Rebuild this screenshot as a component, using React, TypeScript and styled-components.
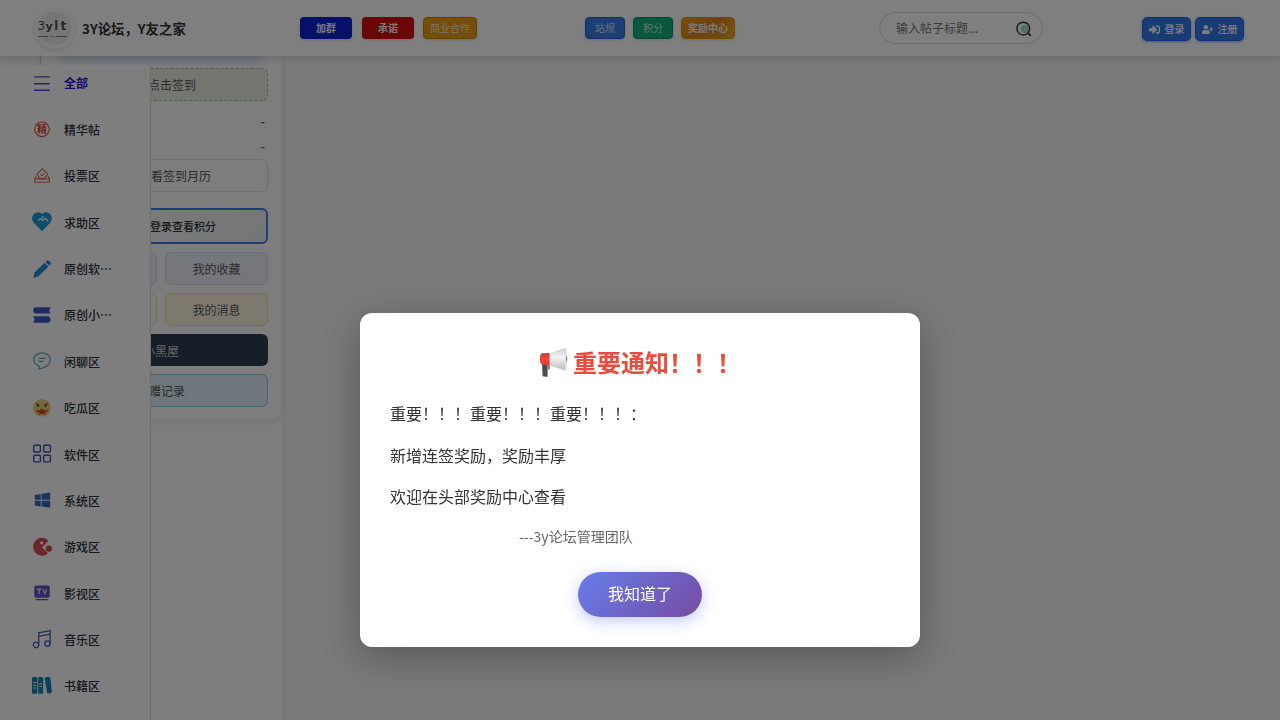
import React from "react";
import styled, { createGlobalStyle, css } from "styled-components";
import { FaSignInAlt, FaUserPlus } from "react-icons/fa";
import { Calendar } from "lucide-react";

const Global = createGlobalStyle`
  * { box-sizing: border-box; }
  html, body { margin: 0; height: 100%; overflow: hidden; }
  body {
    font-family: "Noto Sans CJK SC", sans-serif;
    background: #f5f5f6;
    color: #333;
  }
  button, input { font-family: inherit; margin: 0; }
`;

const Page = styled.div`
  position: relative;
  display: flex;
  flex-direction: column;
  height: 100vh;
  overflow: hidden;
`;

const Header = styled.header`
  position: relative;
  z-index: 3;
  flex: none;
  display: flex;
  align-items: flex-start;
  height: 56px;
  padding: 0 36px 0 35px;
  background: #fff;
  box-shadow: 0 2px 8px rgba(0, 0, 0, 0.15);
`;

const Brand = styled.div`
  display: flex;
  align-items: center;
  gap: 7px;
  width: 265px;
  height: 58px;
`;

const Logo = styled.svg`
  width: 40px;
  height: 40px;
  border-radius: 50%;
  box-shadow: 0 1px 4px rgba(0, 0, 0, 0.14);
`;

const Title = styled.h1`
  margin: 0;
  padding-bottom: 2px;
  font-size: 13.4px;
  font-weight: 700;
  line-height: 20px;
  white-space: nowrap;
`;

const ButtonGroup = styled.div<{ $width: number; $gap: number }>`
  display: flex;
  gap: ${(p) => p.$gap}px;
  width: ${(p) => p.$width}px;
  padding-top: 17px;
`;

const Tag = styled.button<{ $bg: string; $w: number; $edge?: string; $bold?: boolean; $dim?: boolean }>`
  flex: none;
  width: ${(p) => p.$w}px;
  height: 22px;
  padding: 0;
  border: ${(p) => (p.$edge ? `1px solid ${p.$edge}` : "0")};
  border-radius: 4px;
  background: ${(p) => p.$bg};
  background-origin: border-box;
  color: ${(p) => (p.$dim ? "rgba(255,255,255,.78)" : "#f2f2f2")};
  font-size: 10px;
  font-weight: ${(p) => (p.$bold ? 700 : 400)};
  line-height: 18px;
  box-shadow: 0 1px 3px rgba(0, 0, 0, 0.14);
`;

const Search = styled.div`
  display: flex;
  align-items: center;
  justify-content: space-between;
  width: 164px;
  height: 32px;
  margin: 12px 0 0 144px;
  padding: 0 10px 0 16px;
  border: 1px solid #dcdcdf;
  border-radius: 16px;
  background: #fff;
`;

const SearchInput = styled.input`
  width: 110px;
  padding: 0 0 2px;
  border: 0;
  outline: 0;
  background: transparent;
  font-size: 12px;
  &::placeholder { color: #757575; }
`;

const Account = styled.div`
  display: flex;
  gap: 4px;
  margin: 17px 0 0 auto;
`;

const AccountButton = styled.button`
  display: flex;
  align-items: center;
  justify-content: center;
  gap: 5px;
  width: 49px;
  height: 24px;
  padding: 0;
  border: 1px solid #2563eb;
  border-radius: 5px;
  background: #3579e8;
  color: #fff;
  font-size: 10px;
  font-weight: 500;
  line-height: 22px;
  box-shadow: 0 1px 3px rgba(37, 99, 235, 0.5);
`;

const Body = styled.div`
  flex: 1;
  display: flex;
  padding-left: 40px;
  min-height: 0;
`;

const Column = styled.div`
  width: 243px;
  background: #fafafb;
  box-shadow: 1px 0 3px rgba(0, 0, 0, 0.08);
`;

const Card = styled.section`
  display: flex;
  flex-direction: column;
  width: 241px;
  height: 363px;
  padding: 0 13px 12px;
  border-left: 1px solid #c9cdd2;
  border-radius: 0 0 8px 8px;
  background: #fafafb;
  box-shadow: 0 2px 6px rgba(0, 0, 0, 0.1);
`;

const Glow = styled.div`
  flex: none;
  height: 12px;
  background: linear-gradient(#d3e1f1, #e6eef7 60%, #fafafb);
  mask-image: linear-gradient(90deg, transparent, #000 12px, #000 calc(100% - 12px), transparent);
`;

const PanelButton = styled.button<{ $h?: number; $bg?: string; $border?: string; $color?: string }>`
  display: flex;
  align-items: center;
  justify-content: center;
  flex: none;
  width: 100%;
  height: ${(p) => p.$h ?? 33}px;
  padding: 0;
  border: ${(p) => p.$border ?? "0"};
  border-radius: 6px;
  background: ${(p) => p.$bg ?? "#fff"};
  color: ${(p) => p.$color ?? "#555"};
  font-size: 12px;
  white-space: nowrap;
`;

const PointsButton = styled(PanelButton)`
  margin-top: 16px;
  font-size: 11px;
  font-weight: 500;
`;

const Lead = styled.span<{ $w: number }>`
  display: flex;
  flex: none;
  width: ${(p) => p.$w}px;
`;

const Stats = styled.div`
  display: flex;
  flex-direction: column;
  align-items: flex-end;
  height: 58px;
  padding: 7px 3px 0 0;
  color: #3b6ca8;
  font-size: 12px;
  font-weight: 700;
  line-height: 25px;
`;

const Pair = styled.div`
  display: grid;
  grid-template-columns: 1fr 103px;
  gap: 8px;
  margin-top: 8px;
`;

const Stack = styled.div`
  display: flex;
  flex-direction: column;
  gap: 8px;
  margin-top: 8px;
`;

const Nav = styled.nav`
  position: absolute;
  z-index: 2;
  top: 65px;
  left: 0;
  bottom: 0;
  width: 151px;
  overflow: hidden;
  display: flex;
  flex-direction: column;
  gap: 10px;
  border-right: 1px solid #d9dadd;
  background: #fdfdfe;
`;

const NavItem = styled.a<{ $active?: boolean }>`
  flex: none;
  display: flex;
  align-items: center;
  gap: 12px;
  height: 36.36px;
  padding-left: 32px;
  color: #2c3242;
  font-size: 12px;
  font-weight: 500;
  white-space: nowrap;
  svg { flex: none; overflow: visible; }
  ${(p) => p.$active && css`
    padding-bottom: 1px;
    color: #2c18d8;
    font-weight: 700;
  `}
`;

const Overlay = styled.div`
  position: fixed;
  z-index: 10;
  inset: 0;
  background: rgba(0, 0, 0, 0.5);
`;

const Dialog = styled.div`
  position: absolute;
  top: 313px;
  left: 360px;
  width: 560px;
  height: 334px;
  padding: 30px;
  border-radius: 12px;
  background: #fff;
  box-shadow: 0 10px 40px rgba(0, 0, 0, 0.3);
`;

const DialogTitle = styled.h2`
  display: flex;
  align-items: center;
  justify-content: center;
  gap: 5px;
  height: 38px;
  margin: 0 0 20px;
  color: #e74c3c;
  font-size: 24px;
  font-weight: 700;
  line-height: 38px;
`;

const Line = styled.p`
  margin: 0 0 16px;
  font-size: 16px;
  line-height: 25.6px;
`;

const Signature = styled.p`
  margin: -1px 0 25px;
  padding-left: 129px;
  color: #666;
  font-size: 14px;
  line-height: 22px;
`;

const Confirm = styled.button`
  display: block;
  width: 124px;
  height: 45px;
  margin: 0 auto;
  padding: 0 0 2px;
  border: 0;
  border-radius: 23px;
  background: linear-gradient(135deg, #667eea 0%, #764ba2 100%);
  color: #fff;
  font-size: 16px;
  box-shadow: 0 4px 15px rgba(102, 126, 234, 0.4);
`;

const LogoMark = () => (
  <Logo viewBox="0 0 40 40">
    <circle cx="20" cy="20" r="20" fill="#fafafa" />
    <circle cx="20" cy="19.5" r="16.5" fill="#ececee" />
    <g fontFamily="DejaVu Sans" fontWeight="700" fontSize="11.5" fill="#4b4b50">
      <text x="2.6" y="21" fontWeight="400" fontSize="12" fill="#55555a">3</text>
      <text x="10.6" y="20.6" fontSize="11">y</text>
      <text x="19.2" y="20.6">l</text>
      <text x="25.4" y="20.6" fontSize="12">t</text>
    </g>
    <path d="M3 27.5H13M21 27.5H32" stroke="#77777c" strokeWidth="1.2" />
    <path d="M14.5 27.5q1.5-1.5 2.8 0t2.8-.5" stroke="#88888c" strokeWidth=".9" fill="none" />
  </Logo>
);

const SearchIcon = () => (
  <svg width="17" height="17" viewBox="0 0 17 17" fill="none">
    <circle cx="10" cy="9" r="4" fill="#a6dcc5" />
    <circle cx="8.3" cy="8.6" r="6.4" stroke="#333" strokeWidth="1.4" />
    <path d="M13.6 13.6l1.6 1.7" stroke="#333" strokeWidth="1.8" strokeLinecap="round" />
  </svg>
);

const Megaphone = () => (
  <svg width="29" height="30" viewBox="0 0 29 30">
    <defs>
      <linearGradient id="horn" x1="0" y1="0" x2="0" y2="1">
        <stop offset="0" stopColor="#c9cacc" />
        <stop offset=".4" stopColor="#f4f4f5" />
        <stop offset="1" stopColor="#b9babd" />
      </linearGradient>
      <linearGradient id="cap" x1="0" y1="0" x2="0" y2="1">
        <stop offset="0" stopColor="#c23a2c" />
        <stop offset=".45" stopColor="#f5473a" />
        <stop offset="1" stopColor="#e3392c" />
      </linearGradient>
    </defs>
    <path d="M3 16L8.6 17.2V29.5Q6 30 3.6 29.2z" fill="#4a4d50" />
    <path d="M8 18L11 18.6V22L8.6 23z" fill="#85888b" />
    <path d="M10.5 6.2L27 0.8V23.8L10.5 18.4z" fill="url(#horn)" />
    <path d="M26.2 1Q27.4 0 27.8 3V21.5Q27.6 24.8 26.2 23.6z" fill="#dfe0e2" />
    <path d="M27.4 8.5Q29.2 12 27.4 15.5z" fill="#55585b" />
    <path d="M3 6.2L10.6 6V18.5L3.6 17.8Q.8 16.5 .8 12T3 6.2z" fill="url(#cap)" />
  </svg>
);

const icon = (children: React.ReactNode) => (
  <svg width="20" height="20" viewBox="0 0 20 20" fill="none">{children}</svg>
);

const sections: { label: string; icon: React.ReactNode }[] = [
  { label: "全部", icon: icon(<path d="M2.6 3.9h14.8M2.6 10.7h14.8M2.6 17.2h14.8" stroke="#5149cf" strokeWidth="1.4" strokeLinecap="round" />) },
  {
    label: "精华帖",
    icon: icon(
      <>
        <circle cx="10" cy="9.3" r="7.3" stroke="#d6483a" strokeWidth="1.1" />
        <text x="10" y="12.9" textAnchor="middle" fontSize="10" fontWeight="700" fill="#d6483a">精</text>
      </>
    ),
  },
  {
    label: "投票区",
    icon: icon(
      <g stroke="#d8645a" strokeWidth="1.1" strokeLinejoin="round">
        <path d="M10.3 2.6L15.8 8.2 12.4 12.6H7.6L4.9 8.4z" />
        <path d="M8.2 8.3l1.8 1.6L12.7 7.2" />
        <path d="M4.6 10.2L2.6 13V16.2H17.4V13L15.9 10.2M2.6 13H17.4" />
      </g>
    ),
  },
  {
    label: "求助区",
    icon: icon(
      <>
        <path d="M10 19.2L1.6 10.4C-.8 7.6 0 3.2 2.9 1.3 5.5-.4 8.5.1 10 2.2 11.5.1 14.5-.4 17.1 1.3 20 3.2 20.8 7.6 18.4 10.4z" fill="#179bd7" />
        <path d="M6.6 8.1q1.4-2.2 2.8-.6 1.2 1.6 2.9-.3 1.2-1.6 2.2.3l1.5 1.6" stroke="#f5f8fa" strokeWidth="1.3" strokeLinecap="round" />
        <path d="M11.4 4.4L9.8 6.4" stroke="#f5f8fa" strokeWidth="1.1" strokeLinecap="round" />
      </>
    ),
  },
  {
    label: "原创软…",
    icon: icon(
      <g fill="#278bd2">
        <path d="M2.7 13.3L12.6 3.7l3.9 3.7L6.5 17.2l-5.2 1.9z" />
        <path d="M13.4 2.9l1.2-1.2q1.1-1 2.2 0l1.6 1.6q1 1 0 2.1l-1.2 1.2z" />
      </g>
    ),
  },
  {
    label: "原创小…",
    icon: icon(
      <g fill="#3d55c4">
        <path d="M4 2.2H18.6L17.2 5.3 18.6 8.5H4Q1.2 8.3 1.2 5.3T4 2.2z" />
        <path d="M1.2 11.2H15.5Q18.6 11.6 18.6 14.4T15.5 17.8H1.2L2.6 14.4z" />
      </g>
    ),
  },
  {
    label: "闲聊区",
    icon: icon(
      <g stroke="#62a2c2" strokeWidth="1.2" strokeLinecap="round" strokeLinejoin="round">
        <path d="M6.3 14.9C3.6 13.6 1.8 11.3 1.8 8.6 1.8 4.8 5.4 1.9 10 1.9S18.2 4.8 18.2 8.6c0 5-4.5 8.5-11.4 9.4 1-.8 1.2-1.8-.5-3.1z" />
        <path d="M7 7.4h6.5M7 10.4h4" />
      </g>
    ),
  },
  {
    label: "吃瓜区",
    icon: icon(
      <>
        <circle cx="10" cy="9.8" r="8.8" fill="#edcc78" />
        <path d="M3.8 5.8l3.6.6M16 5.8l-3.6.6" stroke="#6b5330" strokeWidth="1" />
        <circle cx="6" cy="8" r="1.1" fill="#493720" />
        <circle cx="13.6" cy="8" r="1.1" fill="#493720" />
        <path d="M4 11.6Q10 14 16.2 11.6L13.4 17 10 15.6 6.6 17z" fill="#cf3e20" />
        <path d="M8.2 11.6q1.8 1 3.6 0" stroke="#5a2618" strokeWidth=".9" />
        <path d="M3.6 14.9q2.2-1 3.4 1.6M16.4 14.9q-2.2-1-3.4 1.6" stroke="#f2b850" strokeWidth="2" />
      </>
    ),
  },
  {
    label: "软件区",
    icon: icon(
      <g stroke="#4650b4" strokeWidth="1.4">
        <rect x="1.7" y="1.3" width="6.7" height="6.7" rx="1" />
        <rect x="11.7" y="1.3" width="6.7" height="6.7" rx="1" />
        <rect x="1.7" y="11.2" width="6.7" height="6.7" rx="1" />
        <rect x="11.7" y="11.2" width="6.7" height="6.7" rx="1" />
      </g>
    ),
  },
  {
    label: "系统区",
    icon: icon(
      <path d="M2.8 4.9L8.7 3.9V9.7H2.8zM9.6 3.7L18.2 2.5V9.7H9.6zM2.8 10.7H8.7V16.4L2.8 15.5zM9.6 10.7H18.2V17.8L9.6 16.6z" fill="#3767bd" />
    ),
  },
  {
    label: "游戏区",
    icon: icon(
      <>
        <path d="M16.4 3.7A8.8 9 0 1 0 16 16.2L10 10.5z" fill="#d84b50" />
        <circle cx="9.8" cy="5.8" r="1.6" fill="#fff" />
        <circle cx="16.8" cy="11.6" r="3.2" fill="#d84b50" />
      </>
    ),
  },
  {
    label: "影视区",
    icon: icon(
      <>
        <rect x="2.3" y="2.4" width="15.5" height="12.3" rx="1.8" fill="#5e57bd" />
        <path d="M4.2 16.6H15.9" stroke="#5e57bd" strokeWidth="1.3" strokeLinecap="round" />
        <path d="M5 6.3H9.4M7.2 6.3V11M10.9 6.3l1.9 4.1 2.1-4.1" stroke="#dddcf4" strokeWidth="1.4" />
      </>
    ),
  },
  {
    label: "音乐区",
    icon: icon(
      <g stroke="#4654b8" strokeWidth="1.3">
        <circle cx="4" cy="15.9" r="2.7" />
        <circle cx="15.4" cy="14.6" r="2.7" />
        <path d="M6.7 15.9V3.9L18.1 1.7V14.6M6.7 7.4L18.1 5.2" />
      </g>
    ),
  },
  {
    label: "书籍区",
    icon: icon(
      <>
        <rect x="0" y="1" width="5.3" height="16.8" rx="1.4" fill="#1480b2" />
        <rect x="6.2" y="1" width="5" height="16.8" rx="1.4" fill="#1480b2" />
        <path d="M13.8 1.3l3.3-.4q1.1 0 1.3 1.3L19.8 15.6q0 1.5-1.1 1.6l-2.3.3q-1.2 0-1.4-1.2L12.7 2.6q0-1.1 1.1-1.3z" fill="#1480b2" />
        <path d="M1.2 6.5h3.2M1.2 9.3h3.2M1.2 12h3.2M7.3 7.7h2.8M7.3 10.3h2.8" stroke="#eef5fa" strokeWidth="1" />
      </>
    ),
  },
];

const noop = () => undefined;

export default function App() {
  return (
    <Page>
      <Global />
      <Header>
        <Brand>
          <LogoMark />
          <Title>3Y论坛，Y友之家</Title>
        </Brand>
        <ButtonGroup $width={284} $gap={10}>
          <Tag $w={52} $bg="#0c24d4" $bold>加群</Tag>
          <Tag $w={52} $bg="#d40c0c" $bold>承诺</Tag>
          <Tag $w={54} $bg="#ea9c12" $edge="#c88010" $dim style={{ marginLeft: -1 }}>商业合作</Tag>
        </ButtonGroup>
        <ButtonGroup $width={151} $gap={8} style={{ paddingLeft: 1 }}>
          <Tag $w={40} $bg="#3b7de8" $edge="#2563d0" $dim>站规</Tag>
          <Tag $w={40} $bg="#10b07a" $edge="#0b8f62" $dim>积分</Tag>
          <Tag $w={54} $bg="linear-gradient(135deg,#f0a01c,#e08020 50%,#eab020)" $edge="#e8960c" $bold>奖励中心</Tag>
        </ButtonGroup>
        <Search>
          <SearchInput placeholder="输入帖子标题..." onChange={noop} />
          <SearchIcon />
        </Search>
        <Account>
          <AccountButton><FaSignInAlt size={11} />登录</AccountButton>
          <AccountButton><FaUserPlus size={11} />注册</AccountButton>
        </Account>
      </Header>
      <Body>
        <Column>
          <Card>
            <Glow />
            <PanelButton $bg="#e8efdf" $border="1px dashed #a3c48f"><Lead $w={22}><Calendar size={13} /></Lead>点击签到</PanelButton>
            <Stats><span>-</span><span>-</span></Stats>
            <PanelButton $bg="#fbfbfd" $border="1px solid #d5dfef"><Lead $w={28}><Calendar size={13} /></Lead>查看签到月历</PanelButton>
            <PointsButton $h={36} $bg="linear-gradient(135deg,#f8fafc,#e8ecf0)" $border="2px solid #3b7de8" $color="#333">
              <Lead $w={44}><Calendar size={13} /></Lead>登录查看积分
            </PointsButton>
            <Pair>
              <PanelButton $bg="#eceefa" $border="1px solid #d3daf3" />
              <PanelButton $bg="#eceefa" $border="1px solid #d3daf3">我的收藏</PanelButton>
            </Pair>
            <Pair>
              <PanelButton $bg="#f8fbe8" $border="1px solid #dde5b0" />
              <PanelButton $bg="#fbf3df" $border="1px solid #efdc98">我的消息</PanelButton>
            </Pair>
            <Stack>
              <PanelButton $h={32} $bg="#2c3e50" $color="#c8cdd2">小黑屋</PanelButton>
              <PanelButton $bg="#dceef7" $border="1px solid #8cc8e8">转赠记录</PanelButton>
            </Stack>
          </Card>
        </Column>
      </Body>
      <Nav>
        {sections.map((s, i) => (
          <NavItem key={s.label} $active={i === 0}>{s.icon}{s.label}</NavItem>
        ))}
      </Nav>
      <Overlay>
        <Dialog>
          <DialogTitle><Megaphone />重要通知！！！</DialogTitle>
          <Line>重要！！！重要！！！重要！！！：</Line>
          <Line>新增连签奖励，奖励丰厚</Line>
          <Line>欢迎在头部奖励中心查看</Line>
          <Signature>---3y论坛管理团队</Signature>
          <Confirm>我知道了</Confirm>
        </Dialog>
      </Overlay>
    </Page>
  );
}
